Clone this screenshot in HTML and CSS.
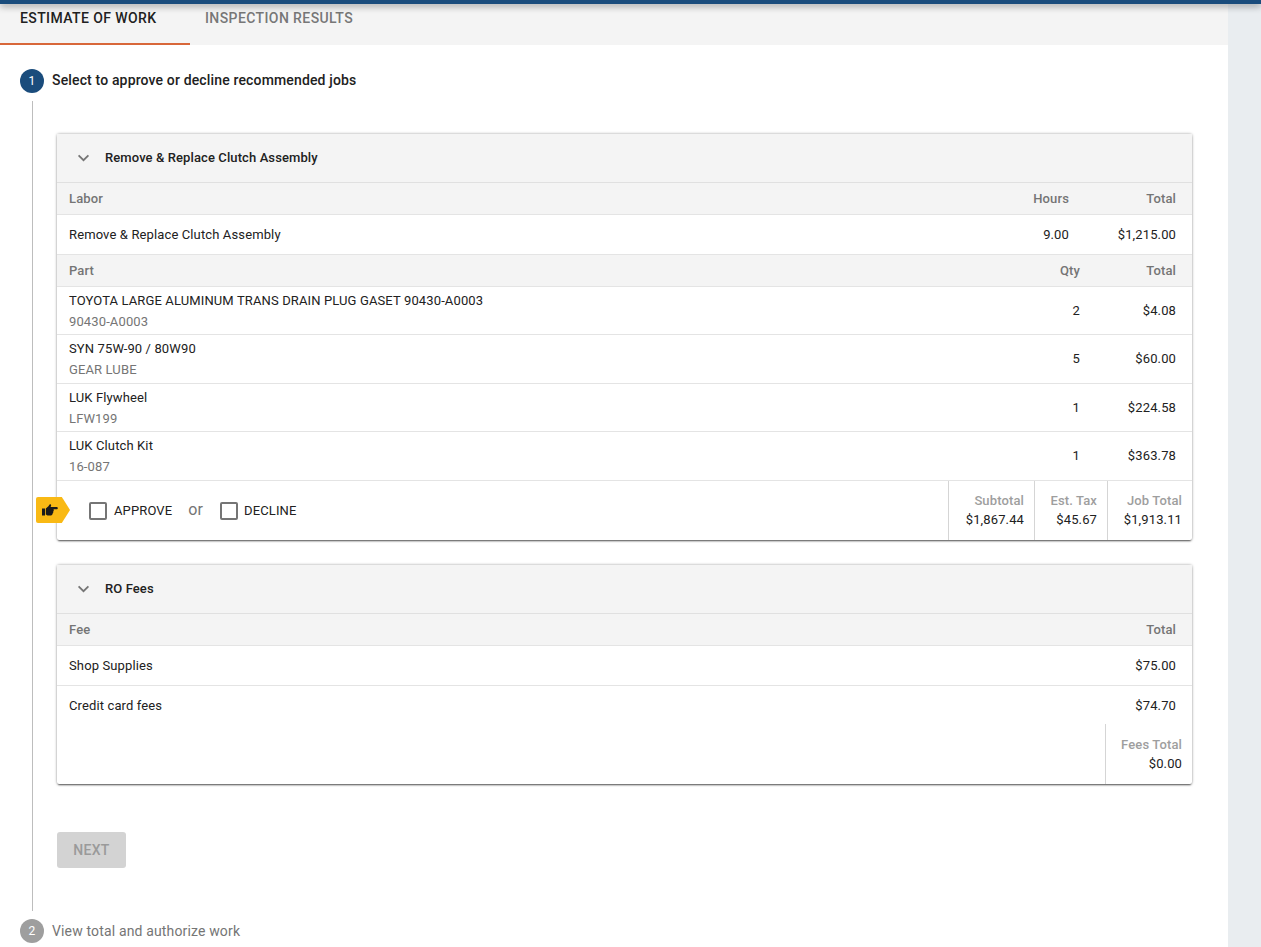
FILE: index.html
```html
<!DOCTYPE html>
<html lang="en">
<head>
<meta charset="utf-8">
<title>Estimate of work</title>
<link rel="stylesheet" href="styles.css">
</head>
<body>
<div class="app">
  <main class="main">
    <nav class="tabs">
      <div class="tab tab-active">ESTIMATE OF WORK</div>
      <div class="tab">INSPECTION RESULTS</div>
    </nav>
    <section class="stepper">
      <header class="step-head step-on">
        <span class="step-num">1</span>
        <span class="step-title">Select to approve or decline recommended jobs</span>
      </header>
      <div class="step-body">
        <article class="card">
          <div class="card-head">
            <svg class="chev" viewBox="0 0 14 9"><path d="M1.500 1.500 7 7l5.500-5.500" fill="none" stroke="#757575" stroke-width="2"/></svg>
            <span>Remove &amp; Replace Clutch Assembly</span>
          </div>
          <div class="row row-head"><span class="grow">Labor</span><span class="qty-h">Hours</span><span class="total">Total</span></div>
          <div class="row row-one"><span class="grow">Remove &amp; Replace Clutch Assembly</span><span class="qty-h">9.00</span><span class="total">$1,215.00</span></div>
          <div class="row row-head"><span class="grow">Part</span><span class="qty-p">Qty</span><span class="total-p">Total</span></div>
          <div class="row row-two"><div class="grow"><div>TOYOTA LARGE ALUMINUM TRANS DRAIN PLUG GASET 90430-A0003</div><div class="sub">90430-A0003</div></div><span class="qty-p">2</span><span class="total-p">$4.08</span></div>
          <div class="row row-two"><div class="grow"><div>SYN 75W-90 / 80W90</div><div class="sub">GEAR LUBE</div></div><span class="qty-p">5</span><span class="total-p">$60.00</span></div>
          <div class="row row-two"><div class="grow"><div>LUK Flywheel</div><div class="sub">LFW199</div></div><span class="qty-p">1</span><span class="total-p">$224.58</span></div>
          <div class="row row-two"><div class="grow"><div>LUK Clutch Kit</div><div class="sub">16-087</div></div><span class="qty-p">1</span><span class="total-p">$363.78</span></div>
          <div class="card-foot">
            <div class="badge">
              <svg class="hand" viewBox="0 0 16 12"><path d="M0 4.500h3v7H0zM3.800 4.600l2.600-2.300L7.600.6c.8-.7 1.900 0 1.500 1L8.600 3h5.900c1.700 0 1.700 2.300 0 2.300h-3c.5 1 .3 1.800-.3 2.300.2.900 0 1.500-.6 1.900 0 1-.6 1.900-1.700 1.900H6.500c-1.200 0-2-.6-2.700-1z" fill="#1a1a1a"/></svg>
            </div>
            <div class="choices">
              <label class="choice"><span class="box"></span>APPROVE</label>
              <span class="or">or</span>
              <label class="choice"><span class="box"></span>DECLINE</label>
            </div>
            <div class="sum sum-sub"><span class="sum-label">Subtotal</span><span>$1,867.44</span></div>
            <div class="sum sum-tax"><span class="sum-label">Est. Tax</span><span>$45.67</span></div>
            <div class="sum sum-job"><span class="sum-label">Job Total</span><span>$1,913.11</span></div>
          </div>
        </article>
        <article class="card">
          <div class="card-head">
            <svg class="chev" viewBox="0 0 14 9"><path d="M1.500 1.500 7 7l5.500-5.500" fill="none" stroke="#757575" stroke-width="2"/></svg>
            <span>RO Fees</span>
          </div>
          <div class="row row-head"><span class="grow">Fee</span><span class="total">Total</span></div>
          <div class="row row-one"><span class="grow">Shop Supplies</span><span class="total">$75.00</span></div>
          <div class="row row-last"><span class="grow">Credit card fees</span><span class="total">$74.70</span></div>
          <div class="fees-foot">
            <div class="sum sum-fees"><span class="sum-label">Fees Total</span><span>$0.00</span></div>
          </div>
        </article>
        <button class="next" type="button" disabled>NEXT</button>
      </div>
      <header class="step-head step-off">
        <span class="step-num">2</span>
        <span class="step-title">View total and authorize work</span>
      </header>
    </section>
  </main>
  <aside class="side"></aside>
</div>
<div class="topbar"></div>
</body>
</html>
```
FILE: styles.css
```css
* { box-sizing: border-box; }
html, body { margin: 0; height: 100%; }
body { font-family: Roboto, "Liberation Sans", sans-serif; font-size: 13px; letter-spacing: .125px; color: #212121; background: #e9edf0; overflow: hidden; }
.topbar { position: absolute; top: 0; left: 0; right: 0; height: 4px; background: #1a4c7c; box-shadow: 0 2px 7px rgba(0,0,0,.45); }
.app { display: flex; height: 947px; }
.main { width: 1228px; background: #fff; }
.side { flex: 1; background: #e9edf0; }
.tabs { display: flex; height: 45px; background: #f4f4f4; }
.tab { width: 190px; height: 45px; padding: 10px 0 0 20px; font-size: 14px; font-weight: 500; line-height: 16px; letter-spacing: .4px; color: #777; white-space: nowrap; }
.tab + .tab { padding-left: 15px; }
.tab-active { color: #212121; border-bottom: 2px solid #d8673a; }
.stepper { padding: 24px 35px 0 20px; }
.step-head { display: flex; align-items: center; gap: 8px; height: 24px; }
.step-num { width: 24px; height: 24px; border-radius: 50%; background: #1a4c7c; color: #fff; font-size: 12px; line-height: 24px; text-align: center; }
.step-title { font-size: 14px; font-weight: 500; letter-spacing: .15px; color: #212121; }
.step-on .step-title { margin-top: -2px; }
.step-off .step-num { background: #9e9e9e; }
.step-off .step-title { font-weight: 400; color: #757575; }
.step-body { margin: 8px 0 8px 12px; border-left: 1px solid #bdbdbd; padding: 33px 0 0 24px; height: 810px; }
.card { position: relative; width: 1135px; margin-bottom: 25px; background: #fff; border-radius: 2px; box-shadow: 0 2px 2px -1px rgba(0,0,0,.6), 0 0 3px rgba(0,0,0,.4); }
.card-head { display: flex; align-items: center; height: 49px; padding: 0 0 2px 20px; gap: 15px; background: #f4f4f4; border-bottom: 1px solid #e0e0e0; font-size: 13px; font-weight: 500; letter-spacing: .1px; color: #212121; }
.chev { width: 13px; height: 8px; margin-top: 2px; }
.row { display: flex; align-items: center; padding: 0 16px 0 12px; border-bottom: 1px solid #e4e4e4; line-height: 20px; }
.grow { flex: 1; min-width: 0; }
.row-head { height: 32px; background: #f4f4f4; color: #757575; font-weight: 500; }
.row-one { height: 40px; }
.row-last { height: 38px; padding-top: 2px; border-bottom: 0; }
.row-two .grow { padding-top: 2px; }
.row-two:nth-child(odd) { height: 48px; }
.row-two:nth-child(even) { height: 49px; }
.sub { color: #757575; line-height: 22px; }
.qty-h { width: 60px; text-align: right; }
.total { width: 107px; text-align: right; }
.qty-p { width: 60px; text-align: right; }
.total-p { width: 96px; text-align: right; }
.card-foot { position: relative; display: flex; align-items: stretch; height: 59px; }
.badge { position: absolute; left: -21px; top: 16px; width: 34px; height: 26px; background: #f9b914; border-radius: 2px; clip-path: polygon(0 0, 76% 0, 100% 50%, 76% 100%, 0 100%); display: flex; align-items: center; padding-left: 6px; }
.hand { width: 16px; height: 12px; }
.choices { flex: 1; display: flex; align-items: center; padding-left: 32px; }
.choice { display: flex; align-items: center; gap: 7px; color: #212121; }
.choice + .or + .choice { gap: 6px; }
.box { width: 18px; height: 18px; border: 2px solid #757575; border-radius: 2px; }
.or { margin: 0 17px 2px 16px; font-size: 16px; color: #757575; }
.sum { display: flex; flex-direction: column; align-items: flex-end; justify-content: center; gap: 1px; border-left: 1px solid #d5d5d5; padding-right: 10px; line-height: 18px; }
.sum-label { color: #9e9e9e; font-weight: 500; }
.sum-sub { width: 86px; }
.sum-tax { width: 73px; }
.sum-job { width: 85px; }
.fees-foot { display: flex; justify-content: flex-end; height: 60px; }
.sum-fees { width: 87px; }
.next { display: block; width: 69px; height: 36px; margin-top: 48px; border: 0; border-radius: 3px; background: #d3d3d3; color: #9a9a9a; font: 500 14px Roboto, sans-serif; letter-spacing: .3px; }
```
